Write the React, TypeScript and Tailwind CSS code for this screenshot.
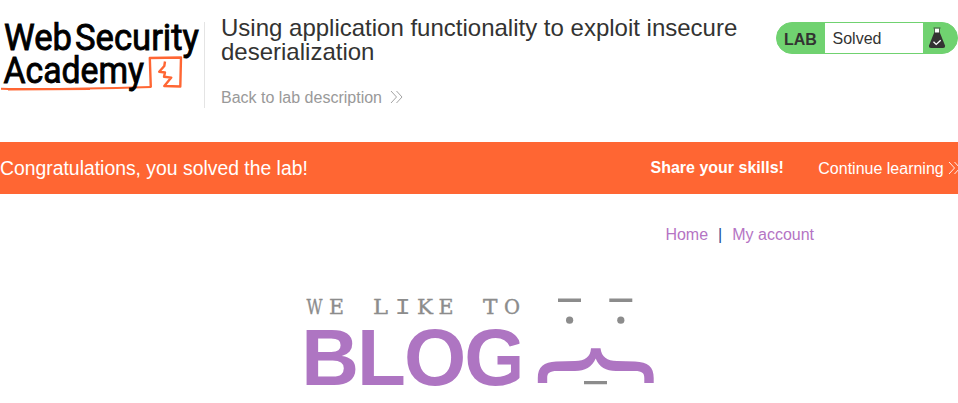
function Chevrons({ className }: { className: string }) {
  return (
    <svg className={className} width="13" height="14" viewBox="0 0 13 14" fill="none" stroke="currentColor" strokeWidth="0.9">
      <path d="M1 1 L6.5 7 L1 13 M6.5 1 L12 7 L6.5 13" />
    </svg>
  );
}

function AcademyLogo() {
  return (
    <svg width="204" height="96" viewBox="0 0 204 96" className="shrink-0">
      <g fill="none" stroke="#ff6633" strokeLinejoin="round">
        <path d="M1 88.7 C40 89.8 100 88.5 151 87" strokeWidth="2" />
        <path d="M8 89.6 L90 89" strokeWidth="1.8" />
        <path d="M150.8 87.5 L149.8 58 L181 57.5 L180.3 86.5 L164.3 86 L171.3 77.6 L164 76.7 L165 72.5 L159.2 71.7 L164.3 66 L165 61.5" strokeWidth="2.4" />
      </g>
      <g fill="#000" stroke="#000" strokeWidth="0.9" fontFamily="Roboto, sans-serif" fontWeight="400" fontSize="37.5">
        <text x="4" y="50.3" textLength="68" lengthAdjust="spacingAndGlyphs">Web</text>
        <text x="75" y="50.3" textLength="124" lengthAdjust="spacingAndGlyphs">Security</text>
        <text x="3.5" y="82.8" textLength="140.5" lengthAdjust="spacingAndGlyphs">Academy</text>
      </g>
    </svg>
  );
}

function LabStatus() {
  return (
    <div className="mt-[22px] ml-auto flex h-8 w-[182px] shrink-0 overflow-hidden rounded-full border border-[#70d270] bg-[#70d270] text-base text-[#333332]">
      <span className="w-12 shrink-0 pl-[7px] font-bold leading-[33px]">LAB</span>
      <span className="w-[98px] shrink-0 bg-white pl-[7.5px] leading-[31px]">Solved</span>
      <svg className="mt-[4px] ml-[5px] shrink-0" width="18" height="22" viewBox="0 0 18 22">
        <path d="M6.8 1.5 H11.2 V6 H6.8Z" fill="#fff" />
        <path d="M6.5 1.5 V6 M11.5 1.5 V6" stroke="#333332" strokeWidth="0.7" />
        <path d="M5.5 1 H12.5" stroke="#333332" strokeWidth="0.8" />
        <path d="M6.2 5.5 H11.8 L17 18.5 Q17.3 21 15 21 H3 Q0.7 21 1 18.5Z" fill="#333332" />
        <path d="M5.5 14.8 L8.2 17.4 L12.7 13.2" fill="none" stroke="#fff" strokeWidth="1.3" />
      </svg>
    </div>
  );
}

function BlogLogo() {
  return (
    <svg width="360" height="118" viewBox="300 285 360 118" className="ml-[300px] block">
      <defs>
        <clipPath id="wordmark">
          <rect x="300" y="320" width="219.5" height="83" />
        </clipPath>
      </defs>
      <path d="M558 300.3 H581 M609.3 300.3 H632.3 M584 382.6 H607" stroke="#8c8c8c" strokeWidth="3.4" />
      <g fill="#8c8c8c" stroke="#8c8c8c" strokeWidth="0.2" fontFamily="'Liberation Mono', monospace" fontSize="23.5">
        <g fontFamily="'DejaVu Serif', serif" fontSize="20.5" strokeWidth="0.35">
          <text x="306.5" y="313.5" textLength="16" lengthAdjust="spacingAndGlyphs">W</text>
          <text x="329" y="313.5" textLength="15" lengthAdjust="spacingAndGlyphs">E</text>
          <text x="373" y="313.5" textLength="15" lengthAdjust="spacingAndGlyphs">L</text>
          <text x="417" y="313.5" textLength="16" lengthAdjust="spacingAndGlyphs">K</text>
          <text x="438.5" y="313.5" textLength="15" lengthAdjust="spacingAndGlyphs">E</text>
          <text x="483" y="313.5" textLength="14.5" lengthAdjust="spacingAndGlyphs">T</text>
          <text x="504" y="313.5" textLength="16" lengthAdjust="spacingAndGlyphs">O</text>
        </g>
        <text x="394.7" y="313.5" strokeWidth="0" fontSize="22.5" textLength="16" lengthAdjust="spacingAndGlyphs">I</text>
      </g>
      <text x="301.3" y="384.5" fill="#ae75c2" fontFamily="'Liberation Sans', sans-serif" fontWeight="700" fontSize="80" letterSpacing="-2" clipPath="url(#wordmark)">BLOG</text>
      <circle cx="569.6" cy="320.2" r="3.6" fill="#8c8c8c" />
      <circle cx="620.8" cy="320.2" r="3.6" fill="#8c8c8c" />
      <path d="M591 348.3 H600.5 C601.5 357 607 361 617 361 L635 361.5 C648 362 653.7 367 653.7 378 V383 H644.3 V378 C644.3 373 642 371 635 371 H616 C606 371 599 367 595.7 358.5 C592 367 585 371 575 371 H557 C549.5 371 547.2 373 547.2 378 V383 H537.8 V378 C537.8 367 544 362 556 361.5 L575 361 C585 361 590.5 357 591 348.3Z" fill="#ae75c2" />
    </svg>
  );
}

export default function App() {
  return (
    <div className="h-[403px] w-full overflow-hidden bg-white font-['Liberation_Sans',sans-serif] text-base text-[#333332]">
      <header className="flex h-[142px] items-start">
        <AcademyLogo />
        <div className="mt-[22px] h-[86px] w-px shrink-0 bg-[#e4e4e4]" />
        <div className="ml-4 w-[540px] shrink-0 pt-4">
          <h2 className="text-2xl leading-6">Using application functionality to exploit insecure deserialization</h2>
          <a className="mt-[22px] flex items-center leading-6 text-[#999999]">
            Back to lab description
            <Chevrons className="mb-0.5 ml-2" />
          </a>
        </div>
        <LabStatus />
      </header>
      <section className="flex h-[52px] items-center overflow-hidden whitespace-nowrap bg-[#ff6633] text-white">
        <p className="w-[650.5px] shrink-0 pt-0.5 text-[19.36px]">Congratulations, you solved the lab!</p>
        <b className="w-[167.8px] shrink-0">Share your skills!</b>
        <a className="flex shrink-0 items-center pt-0.5">
          Continue learning
          <Chevrons className="mb-0.5 ml-1" />
        </a>
      </section>
      <nav className="flex h-[91px] gap-2.5 pt-[29px] pl-[665.4px] text-[#b574c4]">
        <a>Home</a>
        <span className="text-[#1d4f91]">|</span>
        <a>My account</a>
      </nav>
      <BlogLogo />
    </div>
  );
}
